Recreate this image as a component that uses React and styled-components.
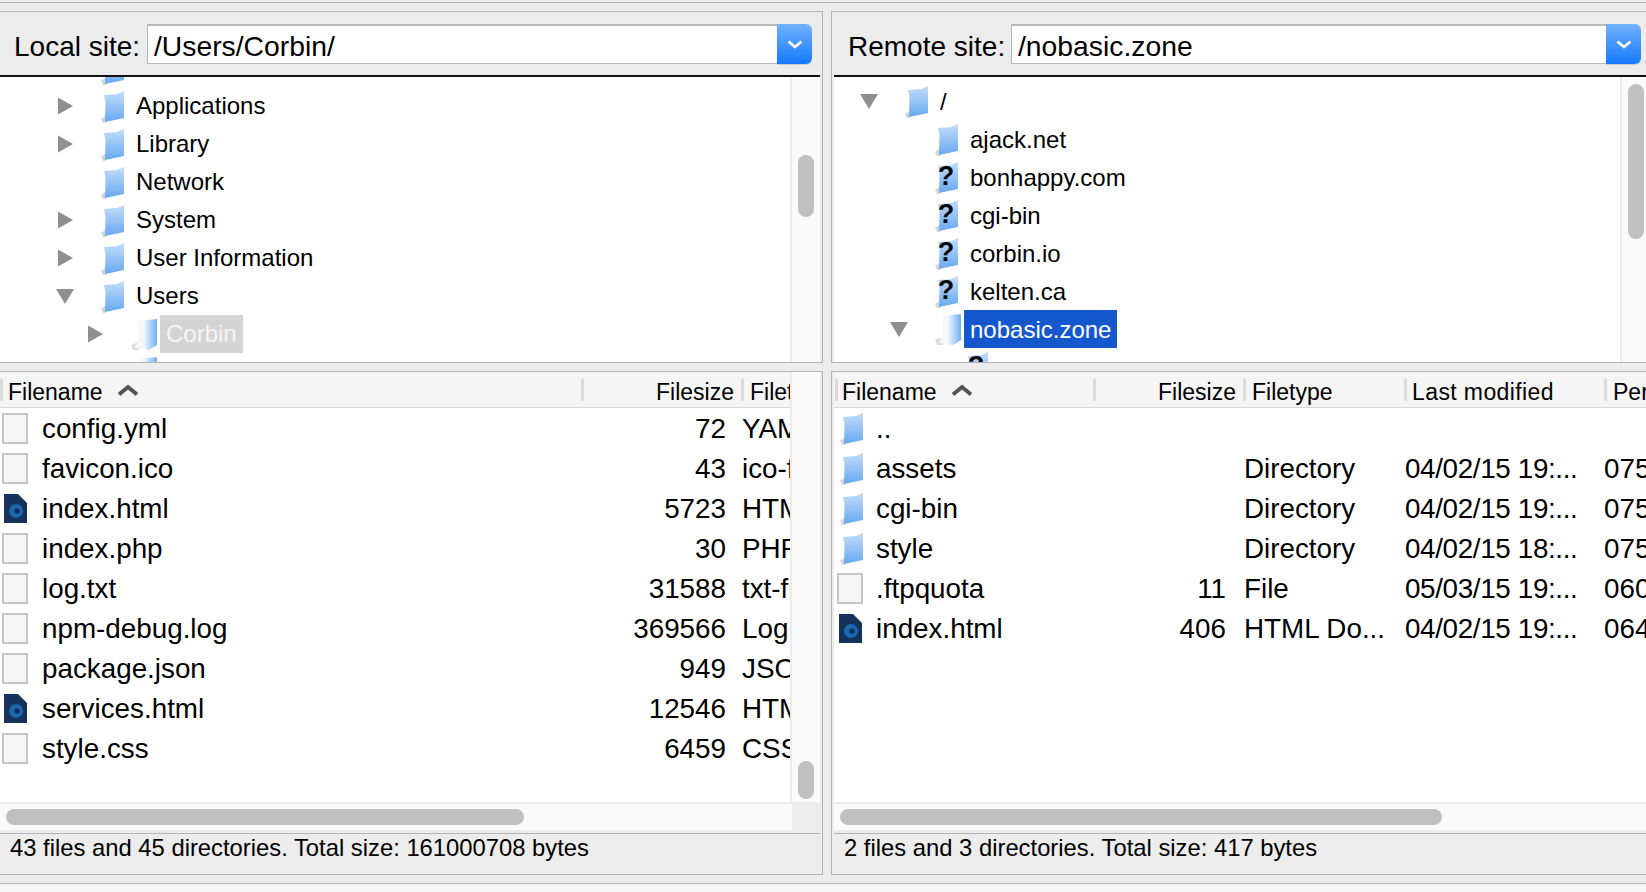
import { useId } from "react";
import styled, { createGlobalStyle } from "styled-components";

const Global = createGlobalStyle`
  html, body { margin: 0; padding: 0; background: #ececec; }
  * { box-sizing: border-box; }
`;

const Window = styled.div`
  width: 1646px;
  height: 892px;
  overflow: hidden;
  background: #ececec;
  color: #000;
  font-family: "Liberation Sans", Arial, sans-serif;
`;
const TopStrip = styled.div`
  height: 11px;
  padding-top: 2px;
  &::before {
    content: "";
    display: block;
    height: 1px;
    background: #b4b4b4;
  }
`;
const Panes = styled.div`
  display: grid;
  grid-template-columns: 823px 815px;
  column-gap: 8px;
  grid-template-rows: 352px 504px;
  row-gap: 8px;
`;
const Pane = styled.section`
  display: flex;
  flex-direction: column;
  overflow: hidden;
  border-top: 1px solid #b4b4b4;
  border-bottom: 1px solid #b4b4b4;
  border-right: ${(props) => (props.$right ? "none" : "1px solid #b4b4b4")};
  border-left: ${(props) => (props.$right ? "1px solid #b4b4b4" : "none")};
  padding: ${(props) => (props.$right ? "0 0 0 2px" : "0 2px 0 0")};
`;
const SiteBar = styled.div`
  flex: none;
  height: 65px;
  display: flex;
  align-items: flex-start;
  padding: 12px ${(props) => (props.$right ? "5px" : "8px")} 0 14px;
  border-bottom: 2px solid #111;
`;
const SiteLabel = styled.label`
  flex: none;
  width: ${(props) => props.$width}px;
  font-size: 28px;
  line-height: 45px;
  white-space: nowrap;
`;
const PathInput = styled.div`
  flex: 1;
  height: 40px;
  background: #fff;
  border: 1px solid #b9b9b9;
  border-top-width: 2px;
  border-right: none;
  padding-left: 6px;
  font-size: 28.3px;
  line-height: 40px;
`;
const DropButton = styled.div`
  flex: none;
  width: 35px;
  height: 40px;
  display: flex;
  align-items: center;
  justify-content: center;
  border-radius: 0 6px 6px 0;
  background: linear-gradient(#72b2fb, #157afd);
  box-shadow: 0 1px 1px rgba(0, 0, 0, 0.15);
`;
const TreeArea = styled.div`
  flex: 1;
  min-height: 0;
  display: flex;
  background: #fff;
`;
const TreeBody = styled.div`
  flex: 1;
  min-width: 0;
  overflow: hidden;
  padding-top: ${(props) => props.$top}px;
`;
const TreeRow = styled.div`
  height: 38px;
  display: flex;
  align-items: center;
  font-size: 24px;
  padding-left: ${(props) => props.$indent}px;
`;
const TreeRowShift = styled(TreeRow)`
  margin-top: ${(props) => props.$shift}px;
`;
const TwistSlot = styled.div`
  flex: none;
  width: 45px;
  margin-left: -2px;
  height: 20px;
  display: flex;
  align-items: center;
`;
const TreeIconSlot = styled.div`
  flex: none;
  width: 29px;
  height: 34px;
  display: flex;
  align-items: center;
  position: relative;
`;
const TreeLabel = styled.span`
  height: 38px;
  line-height: ${(props) => props.$line}px;
  padding: 0 6px;
  white-space: nowrap;
  background: ${(props) => props.$selected || "transparent"};
  color: ${(props) => (props.$selected ? props.$selectedText : "#000")};
`;
const VTrack = styled.div`
  flex: none;
  width: ${(props) => props.$width}px;
  margin-right: ${(props) => props.$gap || 0}px;
  background: #fafafa;
  border-left: 2px solid #ececec;
  padding: ${(props) => props.$top}px 0 0 6px;
`;
const VThumb = styled.div`
  width: 16px;
  height: ${(props) => props.$size}px;
  border-radius: 8px;
  background: #c0c0c0;
`;
const ListHeader = styled.div`
  flex: none;
  height: 36px;
  display: flex;
  align-items: center;
  background: #f5f5f5;
  border-bottom: 1px solid #d9d9d9;
  font-size: 23px;
`;
const HeadSep = styled.div`
  flex: none;
  width: 3px;
  height: 22px;
  margin-left: ${(props) => props.$inset || 0}px;
  background: #dadada;
`;
const HeadCell = styled.div`
  flex: ${(props) => (props.$width ? "none" : "1")};
  width: ${(props) => props.$width}px;
  min-width: 0;
  padding: 5px ${(props) => props.$padRight || 0}px 0 ${(props) => props.$padLeft || 0}px;
  display: flex;
  align-items: center;
  justify-content: ${(props) => (props.$end ? "flex-end" : "flex-start")};
  letter-spacing: ${(props) => props.$track || 0}px;
  white-space: nowrap;
  overflow: hidden;
`;
const SortMark = styled.svg`
  margin: -5px 0 0 15px;
  flex: none;
`;
const ListMiddle = styled.div`
  flex: 1;
  min-height: 0;
  display: flex;
  background: #fff;
`;
const ListBody = styled.div`
  flex: 1;
  min-width: 0;
  overflow: hidden;
`;
const FileRow = styled.div`
  height: 40px;
  padding-top: 2px;
  display: grid;
  grid-template-columns: ${(props) => props.$columns};
  align-items: center;
  font-size: 27.8px;
  white-space: nowrap;
  overflow: hidden;
`;
const NameCell = styled.div`
  display: flex;
  align-items: center;
  padding-left: ${(props) => props.$inset}px;
  overflow: hidden;
`;
const FileIconSlot = styled.div`
  flex: none;
  width: ${(props) => props.$width}px;
  height: 32px;
  margin-top: -2px;
  display: flex;
  align-items: center;
`;
const FolderFile = styled.div`
  margin-left: 5px;
`;
const SizeCell = styled.div`
  text-align: right;
`;
const TextCell = styled.div`
  padding-left: ${(props) => props.$inset}px;
  letter-spacing: ${(props) => props.$track || 0}px;
  overflow: hidden;
`;
const HBar = styled.div`
  flex: none;
  height: 28px;
  margin-right: ${(props) => props.$gap || 0}px;
  background: #fafafa;
  border-top: 2px solid #ececec;
  display: flex;
  align-items: center;
  padding-left: ${(props) => props.$inset}px;
`;
const HThumb = styled.div`
  width: ${(props) => props.$size}px;
  height: 16px;
  border-radius: 8px;
  background: #c0c0c0;
`;
const BarCorner = styled.div`
  margin-left: auto;
  width: 26px;
  height: 100%;
  background: #ececec;
`;
const StatusBar = styled.div`
  flex: none;
  margin-top: 3px;
  height: 41px;
  border-top: 1px solid #b4b4b4;
  padding: 0 0 0 ${(props) => props.$inset}px;
  font-size: 23.8px;
  line-height: 28px;
`;
const BottomStrip = styled.div`
  height: 9px;
  margin-top: 8px;
  border-top: 1px solid #b4b4b4;
  background: #f6f6f6;
`;
const Question = styled.span`
  position: absolute;
  left: 0;
  top: 0;
  width: 22px;
  text-align: center;
  font: bold 27px/32px "Liberation Sans", Arial, sans-serif;
  color: #05070f;
`;
const IconSvg = styled.svg`
  display: block;
  filter: blur(${(props) => props.$blur || 0.6}px);
`;
const HtmlSvg = styled(IconSvg)`
  margin-left: 3px;
`;
const PlainFile = styled.div`
  width: 26px;
  height: 31px;
  margin-left: 2px;
  border: 2px solid #c6c6c6;
  background: #f6f6f6;
`;

const Chevron = () => (
  <svg width="18" height="11" viewBox="0 0 18 11">
    <path d="M2.5 2.5 L9 8 L15.5 2.5" fill="none" stroke="#fff" strokeWidth="2.6" />
  </svg>
);

const Twist = ({ open }) => (
  <svg width="18" height="18" viewBox="0 0 18 18">
    <path d={open ? "M0 2 H18 L9 17 Z" : "M2 0.5 L17 9 L2 17.5 Z"} fill="#8f8f8f" />
  </svg>
);

const Folder = () => {
  const id = useId();
  return (
    <IconSvg width="24" height="33" viewBox="0 0 24 33">
      <defs>
        <linearGradient id={id} x1="0" y1="0" x2="0" y2="1">
          <stop offset="0" stopColor="#c4def9" />
          <stop offset="1" stopColor="#66a8f1" />
        </linearGradient>
      </defs>
      <path d="M0 29 L4 26 L5 33 L2 33 Z" fill="#d5d5d5" />
      <path d="M3 5 L16 4 L23 1 L23 28 L4 32 L4.500 12 Z" fill={`url(#${id})`} />
    </IconSvg>
  );
};

const OpenFolder = () => {
  const id = useId();
  return (
    <IconSvg width="28" height="33" viewBox="0 0 28 33">
      <defs>
        <linearGradient id={id} x1="0" y1="0" x2="1" y2="0">
          <stop offset="0.4" stopColor="#f4f8fd" />
          <stop offset="1" stopColor="#6fadf2" />
        </linearGradient>
      </defs>
      <path d="M0 27 L7 24 L8 32 L2 32 Z" fill="#dcdcdc" />
      <path d="M8 3 L26 1 L26 27 L18 32 L4 30 L8 20 Z" fill={`url(#${id})`} />
    </IconSvg>
  );
};

const HtmlFile = () => (
  <HtmlSvg $blur={0.7} width="26" height="31" viewBox="0 0 26 31">
    <path d="M1 1 H15 L24 10 V30 H1 Z" fill="#14325c" />
    <circle cx="13" cy="18" r="7" fill="#1b67ad" />
    <circle cx="14" cy="18" r="2.600" fill="#0d2f58" />
  </HtmlSvg>
);

const TreeIcon = ({ kind }) => {
  if (kind === "open") return <OpenFolder />;
  if (kind === "unknown")
    return (
      <>
        <Folder />
        <Question>?</Question>
      </>
    );
  return <Folder />;
};

const SortArrow = () => (
  <SortMark width="20" height="12" viewBox="0 0 20 12">
    <path d="M1 10.500 L10 3 L19 10.500" fill="none" stroke="#555" strokeWidth="3.8" />
  </SortMark>
);

const localTree = [
  { name: "Applications", twist: "closed" },
  { name: "Library", twist: "closed" },
  { name: "Network" },
  { name: "System", twist: "closed" },
  { name: "User Information", twist: "closed" },
  { name: "Users", twist: "open" },
  { name: "Corbin", twist: "closed", depth: 1, icon: "open", selected: "#d4d4d4", selectedText: "#f4f4f4" },
  { name: "", depth: 1, icon: "open" },
];

const remoteTree = [
  { name: "/", twist: "open" },
  { name: "ajack.net", depth: 1 },
  { name: "bonhappy.com", depth: 1, icon: "unknown" },
  { name: "cgi-bin", depth: 1, icon: "unknown" },
  { name: "corbin.io", depth: 1, icon: "unknown" },
  { name: "kelten.ca", depth: 1, icon: "unknown" },
  { name: "nobasic.zone", twist: "open", depth: 1, icon: "open", selected: "#1558ce", selectedText: "#fff" },
  { name: "", depth: 2, icon: "unknown" },
];

const localFiles = [
  { name: "config.yml", size: "72", type: "YAML" },
  { name: "favicon.ico", size: "43", type: "ico-file" },
  { name: "index.html", size: "5723", type: "HTML", kind: "html" },
  { name: "index.php", size: "30", type: "PHP" },
  { name: "log.txt", size: "31588", type: "txt-file" },
  { name: "npm-debug.log", size: "369566", type: "Log" },
  { name: "package.json", size: "949", type: "JSON" },
  { name: "services.html", size: "12546", type: "HTML", kind: "html" },
  { name: "style.css", size: "6459", type: "CSS" },
];

const remoteFiles = [
  { name: "..", kind: "folder" },
  { name: "assets", kind: "folder", type: "Directory", modified: "04/02/15 19:...", perm: "0755" },
  { name: "cgi-bin", kind: "folder", type: "Directory", modified: "04/02/15 19:...", perm: "0755" },
  { name: "style", kind: "folder", type: "Directory", modified: "04/02/15 18:...", perm: "0755" },
  { name: ".ftpquota", size: "11", type: "File", modified: "05/03/15 19:...", perm: "0600" },
  { name: "index.html", size: "406", kind: "html", type: "HTML Do...", modified: "04/02/15 19:...", perm: "0644" },
];

const FileGlyph = ({ kind }) => {
  if (kind === "folder")
    return (
      <FolderFile>
        <Folder />
      </FolderFile>
    );
  if (kind === "html") return <HtmlFile />;
  return <PlainFile />;
};

const Tree = ({ rows, base, shift = 0, line = 38 }) =>
  rows.map((row, i) => {
    const Row = i === 0 && shift ? TreeRowShift : TreeRow;
    return (
      <Row key={i} $shift={shift} $indent={base + (row.depth || 0) * 30}>
        <TwistSlot>{row.twist && <Twist open={row.twist === "open"} />}</TwistSlot>
        <TreeIconSlot>
          <TreeIcon kind={row.icon} />
        </TreeIconSlot>
        <TreeLabel $line={line} $selected={row.selected} $selectedText={row.selectedText}>
          {row.name}
        </TreeLabel>
      </Row>
    );
  });

const App = () => (
  <Window>
    <Global />
    <TopStrip />
    <Panes>
      <Pane>
        <SiteBar>
          <SiteLabel $width={133}>Local site:</SiteLabel>
          <PathInput>/Users/Corbin/</PathInput>
          <DropButton>
            <Chevron />
          </DropButton>
        </SiteBar>
        <TreeArea>
          <TreeBody $top={0}>
            <Tree rows={[{ name: "" }, ...localTree]} base={58} shift={-28} />
          </TreeBody>
          <VTrack $width={28} $gap={2} $top={78}>
            <VThumb $size={62} />
          </VTrack>
        </TreeArea>
      </Pane>
      <Pane $right>
        <SiteBar $right>
          <SiteLabel $width={163}>Remote site:</SiteLabel>
          <PathInput>/nobasic.zone</PathInput>
          <DropButton>
            <Chevron />
          </DropButton>
        </SiteBar>
        <TreeArea>
          <TreeBody $top={5}>
            <Tree rows={remoteTree} base={28} line={40} />
          </TreeBody>
          <VTrack $width={26} $top={7}>
            <VThumb $size={155} />
          </VTrack>
        </TreeArea>
      </Pane>

      <Pane>
        <ListMiddle>
          <ListBody>
            <ListHeader>
              <HeadSep />
              <HeadCell $width={578} $padLeft={5}>
                Filename
                <SortArrow />
              </HeadCell>
              <HeadSep />
              <HeadCell $width={157} $padRight={7} $end>
                Filesize
              </HeadCell>
              <HeadSep />
              <HeadCell $padLeft={6}>Filetype</HeadCell>
            </ListHeader>
            {localFiles.map((file) => (
              <FileRow key={file.name} $columns="590px 136px 64px">
                <NameCell $inset={0}>
                  <FileIconSlot $width={42}>
                    <FileGlyph kind={file.kind} />
                  </FileIconSlot>
                  {file.name}
                </NameCell>
                <SizeCell>{file.size}</SizeCell>
                <TextCell $inset={16}>{file.type}</TextCell>
              </FileRow>
            ))}
          </ListBody>
          <VTrack $width={28} $gap={2} $top={389}>
            <VThumb $size={38} />
          </VTrack>
        </ListMiddle>
        <HBar $inset={6} $gap={2}>
          <HThumb $size={518} />
          <BarCorner />
        </HBar>
        <StatusBar $inset={10}>43 files and 45 directories. Total size: 161000708 bytes</StatusBar>
      </Pane>
      <Pane $right>
        <ListMiddle>
          <ListBody>
            <ListHeader>
              <HeadSep $inset={1} />
              <HeadCell $width={255} $padLeft={4}>
                Filename
                <SortArrow />
              </HeadCell>
              <HeadSep />
              <HeadCell $width={147} $padRight={7} $end>
                Filesize
              </HeadCell>
              <HeadSep />
              <HeadCell $width={158} $padLeft={6}>
                Filetype
              </HeadCell>
              <HeadSep />
              <HeadCell $width={197} $padLeft={5} $track={0.4}>
                Last modified
              </HeadCell>
              <HeadSep />
              <HeadCell $padLeft={6}>Permissions</HeadCell>
            </ListHeader>
            {remoteFiles.map((file) => (
              <FileRow key={file.name} $columns="260px 132px 179px 199px 1fr">
                <NameCell $inset={1}>
                  <FileIconSlot $width={41}>
                    <FileGlyph kind={file.kind} />
                  </FileIconSlot>
                  {file.name}
                </NameCell>
                <SizeCell>{file.size}</SizeCell>
                <TextCell $inset={18}>{file.type}</TextCell>
                <TextCell $inset={0} $track={-0.35}>
                  {file.modified}
                </TextCell>
                <TextCell $inset={0}>{file.perm}</TextCell>
              </FileRow>
            ))}
          </ListBody>
        </ListMiddle>
        <HBar $inset={6}>
          <HThumb $size={602} />
        </HBar>
        <StatusBar $inset={10}>2 files and 3 directories. Total size: 417 bytes</StatusBar>
      </Pane>
    </Panes>
    <BottomStrip />
  </Window>
);

export default App;
